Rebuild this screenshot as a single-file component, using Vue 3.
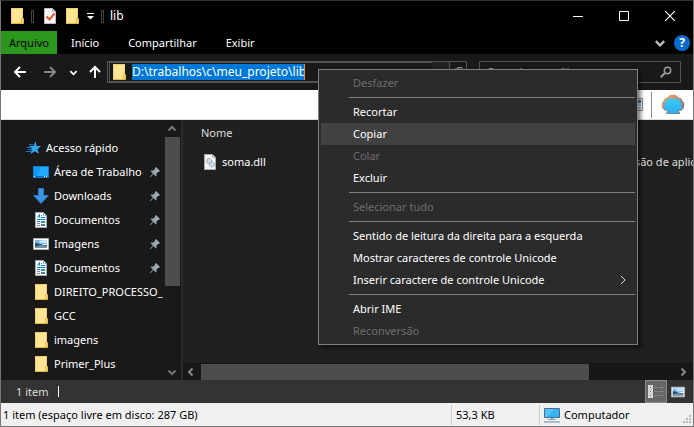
<script setup>
import { ref } from 'vue'

const path = ref('D:\\trabalhos\\c\\meu_projeto\\lib')
const tabs = ['Início', 'Compartilhar', 'Exibir']
const places = [
  { name: 'Área de Trabalho', icon: 'desktop', pinned: true },
  { name: 'Downloads', icon: 'download', pinned: true },
  { name: 'Documentos', icon: 'document', pinned: true },
  { name: 'Imagens', icon: 'picture', pinned: true },
  { name: 'Documentos', icon: 'document', pinned: true },
  { name: 'DIREITO_PROCESSO_', icon: 'folder' },
  { name: 'GCC', icon: 'folder' },
  { name: 'imagens', icon: 'folder' },
  { name: 'Primer_Plus', icon: 'folder' },
]
const menuGroups = [
  [{ label: 'Desfazer', disabled: true }],
  [
    { label: 'Recortar' },
    { label: 'Copiar', active: true },
    { label: 'Colar', disabled: true },
    { label: 'Excluir' },
  ],
  [{ label: 'Selecionar tudo', disabled: true }],
  [
    { label: 'Sentido de leitura da direita para a esquerda' },
    { label: 'Mostrar caracteres de controle Unicode' },
    { label: 'Inserir caractere de controle Unicode', submenu: true },
  ],
  [{ label: 'Abrir IME' }, { label: 'Reconversão', disabled: true }],
]
</script>

<template>
  <svg class="defs" aria-hidden="true">
    <symbol id="folder" viewBox="0 0 16 16">
      <path d="M2 0h12v16H2z" fill="#ffe594" />
      <path d="M2.500 15.500V.5h11v10" fill="none" stroke="#f0cf68" />
      <path d="M2 15.500h12.500v-5h-2v5" fill="#ffe08a" stroke="#e2b840" />
    </symbol>
    <symbol id="desktop" viewBox="0 0 16 16">
      <path d="M0 2h16v12H0z" fill="#0b7fd6" />
      <path d="M1 3h14v9H1z" fill="#119bf5" />
      <path d="M9 3h6v9H4z" fill="#23a9ff" />
      <path d="M1 12h14v1H1z" fill="#0869b4" />
      <path d="M1 12h1v1H1zM11 12h1v1h-1zM13 12h1v1h-1z" fill="#fff" />
    </symbol>
    <symbol id="download" viewBox="0 0 16 16">
      <path d="M5.500 .5h5v7h5L8 15.500 .5 7.500h5z" fill="#3d94e4" stroke="#2878c4" />
    </symbol>
    <symbol id="document" viewBox="0 0 16 16">
      <path d="M2.500 .5h8l3 3v12h-11z" fill="#f7f9fa" stroke="#a5adb1" />
      <path d="M10.500 .5v3h3" fill="none" stroke="#a5adb1" />
      <path d="M4.500 5.500l2-3v3M8 3.500h1M8 5.500h4M4 7.500h8M4 9.500h3" fill="none" stroke="#1681bd" />
      <path d="M8 9h4v2H8z" fill="#2593cd" />
      <path d="M4 11.500h3M4 13.500h3" stroke="#858d91" />
      <path d="M8 12h4v2H8z" fill="#517c88" />
    </symbol>
    <symbol id="picture" viewBox="0 0 16 16">
      <path d="M.5 2.500h15v11H.5z" fill="#fff" stroke="#aeb4b8" />
      <path d="M2 4h12v4H2z" fill="#7bb8ed" />
      <path d="M6 5l4-1h4v3H7z" fill="#c7e4f8" />
      <path d="M2 7c4 0 6 2 12 2v3H2z" fill="#24536c" />
      <path d="M2 11c4-2 7-2 12-1v2H2z" fill="#7295aa" />
    </symbol>
    <symbol id="chevron" viewBox="0 0 10 10">
      <path d="M1.500 3.500L5 7l3.500-3.500" fill="none" stroke="currentColor" stroke-width="2" />
    </symbol>
  </svg>

  <div class="window">
    <header class="titlebar">
      <svg class="ico"><use href="#folder" /></svg>
      <span class="grip"></span>
      <button class="plain" aria-label="Propriedades">
        <svg class="ico" viewBox="0 0 16 16">
          <path d="M2.500 .5h8l3 3v12h-11z" fill="#f5f7f8" stroke="#b7bdc0" />
          <path d="M10.500 .5v3h3" fill="none" stroke="#a5abae" />
          <path d="M4.500 8.500l3 3 5-6" fill="none" stroke="#e2592b" stroke-width="2" />
        </svg>
      </button>
      <button class="plain next" aria-label="Nova pasta"><svg class="ico"><use href="#folder" /></svg></button>
      <button class="plain custom" aria-label="Personalizar">
        <svg width="8" height="7" viewBox="0 0 8 7"><path d="M0 0h7v1H0zM0 3h7L3.500 6.500z" fill="#fff" /></svg>
      </button>
      <span class="grip"></span>
      <h1>lib</h1>
      <div class="controls">
        <button class="plain" aria-label="Minimizar"><svg width="10" height="10"><path d="M0 5.500h10" stroke="#fff" /></svg></button>
        <button class="plain" aria-label="Maximizar"><svg width="10" height="10"><path d="M.5 .5h9v9h-9z" fill="none" stroke="#fff" /></svg></button>
        <button class="plain" aria-label="Fechar"><svg width="10" height="10"><path d="M0 0l10 10M10 0L0 10" stroke="#fff" stroke-width="1.200" /></svg></button>
      </div>
    </header>

    <nav class="tabs">
      <button class="plain file">Arquivo</button>
      <button v-for="t in tabs" :key="t" class="plain tab">{{ t }}</button>
      <button class="plain expand" aria-label="Expandir"><svg width="12" height="12"><use href="#chevron" /></svg></button>
      <button class="plain help" aria-label="Ajuda">?</button>
    </nav>

    <div class="address">
      <div class="arrows">
        <button class="plain" aria-label="Voltar">
          <svg width="14" height="14" viewBox="0 0 14 14"><path d="M13 7H2M7 2L2 7l5 5" fill="none" stroke="#fff" stroke-width="2" /></svg>
        </button>
        <button class="plain" aria-label="Avançar">
          <svg width="14" height="14" viewBox="0 0 14 14"><path d="M1 7h11M7 2l5 5-5 5" fill="none" stroke="#858585" stroke-width="2" /></svg>
        </button>
        <button class="plain recent" aria-label="Recentes"><svg width="9" height="9"><use href="#chevron" /></svg></button>
        <button class="plain" aria-label="Acima">
          <svg width="14" height="14" viewBox="0 0 14 14"><path d="M7 13V2M2 7l5-5 5 5" fill="none" stroke="#fff" stroke-width="2" /></svg>
        </button>
      </div>
      <div class="combo">
        <div class="path">
          <svg class="ico"><use href="#folder" /></svg>
          <input v-model="path" aria-label="Endereço" />
        </div>
        <span class="drop"></span>
        <button class="plain refresh" aria-label="Atualizar">
          <svg width="10" height="10" viewBox="0 0 10 10"><path d="M8.500 6A4 4 0 1 1 7 2M5 .5h4v4" fill="none" stroke="#888" /></svg>
        </button>
      </div>
      <div class="search">
        <input placeholder="Pesquisar em lib" aria-label="Pesquisar em lib" />
        <svg width="12" height="12" viewBox="0 0 12 12"><circle cx="7.500" cy="4.500" r="3.200" fill="none" stroke="#999" stroke-width="1.500" /><path d="M5 7L.7 11.300" stroke="#999" stroke-width="2" /></svg>
      </div>
    </div>

    <div class="toolbar">
      <svg width="16" height="16" viewBox="0 0 16 16"><path d="M.5 1.500h14v12H.5z" fill="#f3f5f6" stroke="#8a8a8a" /><path d="M10 3h3v3h-3z" fill="#2383da" /><path d="M3 5h5M3 8h6M3 11h6M11 8h2M11 11h2" stroke="#8d99a0" /></svg>
      <span class="divider"></span>
      <svg width="24" height="21" viewBox="0 0 24 21">
        <defs>
          <linearGradient id="rim" x2="1" y2="1"><stop offset="0" stop-color="#f9ae6b" /><stop offset=".5" stop-color="#c98068" /><stop offset="1" stop-color="#86535c" /></linearGradient>
          <linearGradient id="shell" x2="0" y2="1"><stop offset="0" stop-color="#2fd3f6" /><stop offset="1" stop-color="#35a9ea" /></linearGradient>
        </defs>
        <path d="M5 20l1-3c-2 0-3-1-4-2-1-1-1.500-2-1-3-.8-2 0-4 1.500-5 .3-2 2-3.500 4-3.500C8 1.500 10 .5 12 1c2-.5 4 .5 5.500 2.500 2 0 3.700 1.500 4 3.500C23 8 24 10 23 12c.3 1-.2 2-1 3-1 1-2 2-4 2l1 3z" fill="url(#rim)" />
        <path d="M6 19l1.500-3C5 16 3 14.500 2 13l3-.5L2.500 9l3.500.5L5 5.500l3.500 2L9 3.500l3 3 3-3 .5 4 3.500-2-1 4 3.500-.5-2.500 3.500 3 .5c-1 1.500-3 3-5.500 3l1.500 3z" fill="url(#shell)" stroke="url(#shell)" stroke-linejoin="round" />
      </svg>
    </div>

    <main>
      <aside>
        <a href="#" class="quick">
          <svg width="16" height="16" viewBox="0 0 16 16"><path d="M9.500 1l1 5H15l-3.500 3.200L13 14l-4-2.800L4.500 14 6 9 3 6h4.500z" fill="#35a6ee" /><path d="M3 4.500h4M1 7.500h5M2 9.500h4M0 11.500h5" stroke="#1374bd" /></svg>
          Acesso rápido
        </a>
        <a v-for="(p, i) in places" :key="i" href="#" class="place">
          <svg class="ico"><use :href="'#' + p.icon" /></svg>
          <span>{{ p.name }}</span>
          <svg v-if="p.pinned" class="pin" width="10" height="10" viewBox="0 0 10 10"><path d="M6 0l4 4-1 1H8L6.500 6.500V9L6 9.500 3.500 7 .5 10H0v-.5L3 6.500.5 4 1 3.500h2.500L5 2V1z" fill="#9aa8b3" /></svg>
        </a>
      </aside>
      <div class="vscroll">
        <svg class="up" width="10" height="10"><use href="#chevron" /></svg>
        <span class="thumb"></span>
        <svg width="10" height="10"><use href="#chevron" /></svg>
      </div>
      <section class="files">
        <table>
          <thead><tr><th class="name">Nome</th><th class="date">Data de modificação</th><th>Tipo</th></tr></thead>
          <tbody>
            <tr>
              <td class="name">
                <div class="cell">
                  <svg class="ico" viewBox="0 0 16 16"><path d="M2.500 .5h8l3 3v12h-11z" fill="#f5f5f5" stroke="#aaa" /><path d="M10.500 .5v3h3" fill="none" stroke="#aaa" /><circle cx="7" cy="7" r="2.500" fill="#ddd" stroke="#8b979e" stroke-dasharray="1.500 .5" /><circle cx="10" cy="10.500" r="2.500" fill="#cfe5f2" stroke="#7c9db3" stroke-dasharray="1.500 .5" /></svg>
                  soma.dll
                </div>
              </td>
              <td class="date">12/05/2021 14:20</td>
              <td>Extensão de aplicativo</td>
            </tr>
          </tbody>
        </table>
        <div class="hscroll">
          <svg class="left" width="10" height="10"><use href="#chevron" /></svg>
          <span class="thumb"></span>
          <svg class="right" width="10" height="10"><use href="#chevron" /></svg>
        </div>
      </section>
    </main>

    <div class="summary">
      <span>1 item</span><i></i>
      <button class="plain view on" aria-label="Detalhes">
        <svg width="16" height="14" viewBox="0 0 16 14"><path d="M0 0h5v13H0z" fill="#e8e8e8" /><path d="M1 1h3v3H1zM1 5h3v3H1zM1 9h3v3H1z" fill="#fff" stroke="#999" stroke-width=".5" /><path d="M2 2h1v1H2zM2 6h1v1H2zM2 10h1v1H2z" fill="#754a54" /><path d="M6 2.500h4M11 2.500h5M6 6.500h4M11 6.500h5M6 10.500h4M11 10.500h5" stroke="#858585" /></svg>
      </button>
      <button class="plain view" aria-label="Miniaturas"><svg width="14" height="14"><use href="#picture" /></svg></button>
    </div>

    <footer>
      <span class="free">1 item (espaço livre em disco: 287 GB)</span>
      <span class="size">53,3 KB</span>
      <span class="computer">
        <svg width="16" height="16" viewBox="0 0 16 16"><path d="M.5 1.500h15v9H.5z" fill="#38b2f7" stroke="#456f8d" /><path d="M1 2h9l-7 8H1z" fill="#58c2fa" /><path d="M7 11h2v1H7zM4 12h8v1H4z" fill="#8b9ba8" /><path d="M0 14h16v2H0z" fill="#a8bccb" /></svg>
        Computador
      </span>
      <svg class="resize" width="8" height="8" viewBox="0 0 8 8"><path d="M6 0h2v2H6zM3 3h2v2H3zM6 3h2v2H6zM0 6h2v2H0zM3 6h2v2H3zM6 6h2v2H6z" fill="#b8b8b8" /></svg>
    </footer>

    <div class="menu" role="menu">
      <div v-for="(group, g) in menuGroups" :key="g" class="group">
        <button
          v-for="item in group"
          :key="item.label"
          class="plain item"
          :class="{ active: item.active }"
          role="menuitem"
          :disabled="item.disabled"
        >
          {{ item.label }}
          <svg v-if="item.submenu" width="8" height="10" viewBox="0 0 8 10"><path d="M2 1l4 4-4 4" fill="none" stroke="#ddd" /></svg>
        </button>
      </div>
    </div>
  </div>
</template>

<style>
body { margin: 0; background: #202020; }
</style>

<style scoped>
* { box-sizing: border-box; }
.defs { position: absolute; width: 0; height: 0; }
svg { display: block; flex: none; }
.ico { width: 16px; height: 16px; }
.plain { display: flex; align-items: center; justify-content: center; border: 0; padding: 0; background: none; color: inherit; font: inherit; }
a { color: inherit; text-decoration: none; }
input { border: 0; padding: 0; outline: 0; background: none; color: inherit; font: inherit; }

.window {
  position: relative;
  display: flex;
  flex-direction: column;
  min-height: 100vh;
  border: 1px solid #777;
  border-top-color: #333;
  background: #000;
  color: #fff;
  font: 11px/16px "Noto Sans", "Open Sans", sans-serif;
  overflow: hidden;
}

.titlebar { display: flex; align-items: center; height: 30px; padding-left: 8px; }
.grip { width: 3px; height: 13px; margin-left: 6px; border: 1px solid #444; }
.titlebar .grip + .plain { margin-left: 8px; }
.next { margin-left: 6px; }
.custom { margin-left: 7px; }
h1 { margin: 0 0 0 6px; font-size: 12px; font-weight: 400; }
.controls { display: flex; margin-left: auto; }
.controls .plain { width: 46px; height: 30px; }

.tabs { display: flex; align-items: center; height: 23px; padding-right: 3px; }
.file { width: 56px; height: 23px; background: #2b971d; color: #000; }
.tab { margin-left: 14px; }
.tab + .tab { margin-left: 29px; }
.expand { margin-left: auto; color: #bbb; }
.help { width: 16px; height: 16px; margin-left: 8px; border-radius: 8px; background: #0a6ccc; font-size: 12px; font-weight: 700; }

.address { display: flex; align-items: center; height: 36px; padding: 0 12px; background: #191919; }
.arrows { display: flex; align-items: center; gap: 16px; width: 94px; flex: none; }
.recent { width: 9px; margin: 0 -6px 0 -4px; }
.combo { display: flex; flex: 1; height: 22px; border: 1px solid #535353; padding-left: 1px; }
.path { display: flex; align-items: center; flex: 1; border: 1px solid #535353; border-right: 0; padding-left: 1px; }
.path input { height: 16px; width: 173px; margin-left: 5px; field-sizing: content; background: #0078d7; border-right: 1px solid #f58a2c; font-size: 12px; }
.drop { width: 17px; background: #222; }
.refresh { width: 17px; border-left: 1px solid #535353; }
.search { display: flex; align-items: center; width: 202px; height: 22px; margin-left: 12px; padding: 0 8px; border: 1px solid #535353; }
.search input { flex: 1; min-width: 0; }
.search input::placeholder { color: #999; opacity: 1; }

.toolbar { display: flex; align-items: center; justify-content: flex-end; height: 30px; padding-right: 8px; background: #fff; border-bottom: 1px solid #ddd; }
.divider { width: 1px; height: 26px; margin: 0 9px 0 7px; background: #888; }

main { display: flex; flex: 1; background: #191919; }
aside { width: 162px; flex: none; padding-top: 16px; }
.quick, .place { display: flex; align-items: center; height: 24px; white-space: nowrap; }
.quick { gap: 4px; padding-left: 25px; }
.place { gap: 5px; padding-left: 32px; padding-right: 3px; }
.pin { margin-left: auto; }
.vscroll { display: flex; flex-direction: column; align-items: center; width: 18px; flex: none; padding: 4px 1px 3px; color: #777; }
.vscroll .up { transform: rotate(180deg); margin-bottom: 3px; }
.vscroll .thumb { width: 15px; height: 149px; margin-bottom: auto; background: #4d4d4d; }
.files { display: flex; flex-direction: column; flex: 1; min-width: 0; border-left: 2px solid #2b2b2b; background: #202020; overflow: hidden; }
table { width: 560px; table-layout: fixed; border-collapse: collapse; margin-left: 18px; }
th { height: 26px; padding: 0; text-align: left; font-weight: 400; color: #dedede; }
td { height: 32px; padding: 0; color: #dedede; }
td.name { color: #fff; }
.name { width: 240px; }
.date { width: 165px; }
.cell { display: flex; align-items: center; gap: 4px; padding-left: 1px; }
.hscroll { display: flex; align-items: center; height: 17px; margin-top: auto; padding: 0 5px 0 3px; background: #171717; color: #888; }
.hscroll .thumb { flex: 382 1 0; height: 16px; margin: 0 4px 0 5px; background: #4d4d4d; }
.hscroll::after { content: ""; flex: 84 1 0; }
.left { transform: rotate(90deg); }
.right { order: 1; transform: rotate(-90deg); }

.summary { display: flex; align-items: center; height: 23px; padding: 0 4px 0 15px; background: #333; color: #dedede; }
.summary i { width: 1px; height: 11px; margin: 0 auto 0 10px; background: #fff; }
.view { width: 22px; height: 23px; }
.view.on { background: #666; border: 1px solid #888; }

footer { display: flex; align-items: center; height: 23px; padding: 0 2px; background: #f0f0f0; color: #000; line-height: 20px; white-space: nowrap; }
.free { flex: 1; }
.size { width: 88px; height: 20px; padding-left: 4px; border-left: 1px solid #ccc; }
.computer { display: flex; align-items: center; gap: 4px; width: 144px; height: 20px; padding-left: 4px; border-left: 1px solid #ccc; }
.resize { align-self: flex-end; margin-bottom: 3px; }

.menu { position: absolute; left: 317px; top: 68px; width: 320px; padding: 2px; border: 1px solid #808080; background: #2b2b2b; box-shadow: 3px 3px 4px rgba(0, 0, 0, .5); }
.group + .group::before { content: ""; display: block; height: 1px; margin: 3px 0 3px 28px; background: #808080; }
.item { width: 100%; height: 22px; justify-content: space-between; padding: 0 8px 0 32px; text-align: left; }
.item:disabled { color: #6d6d6d; }
.item.active { background: #414141; }
</style>
